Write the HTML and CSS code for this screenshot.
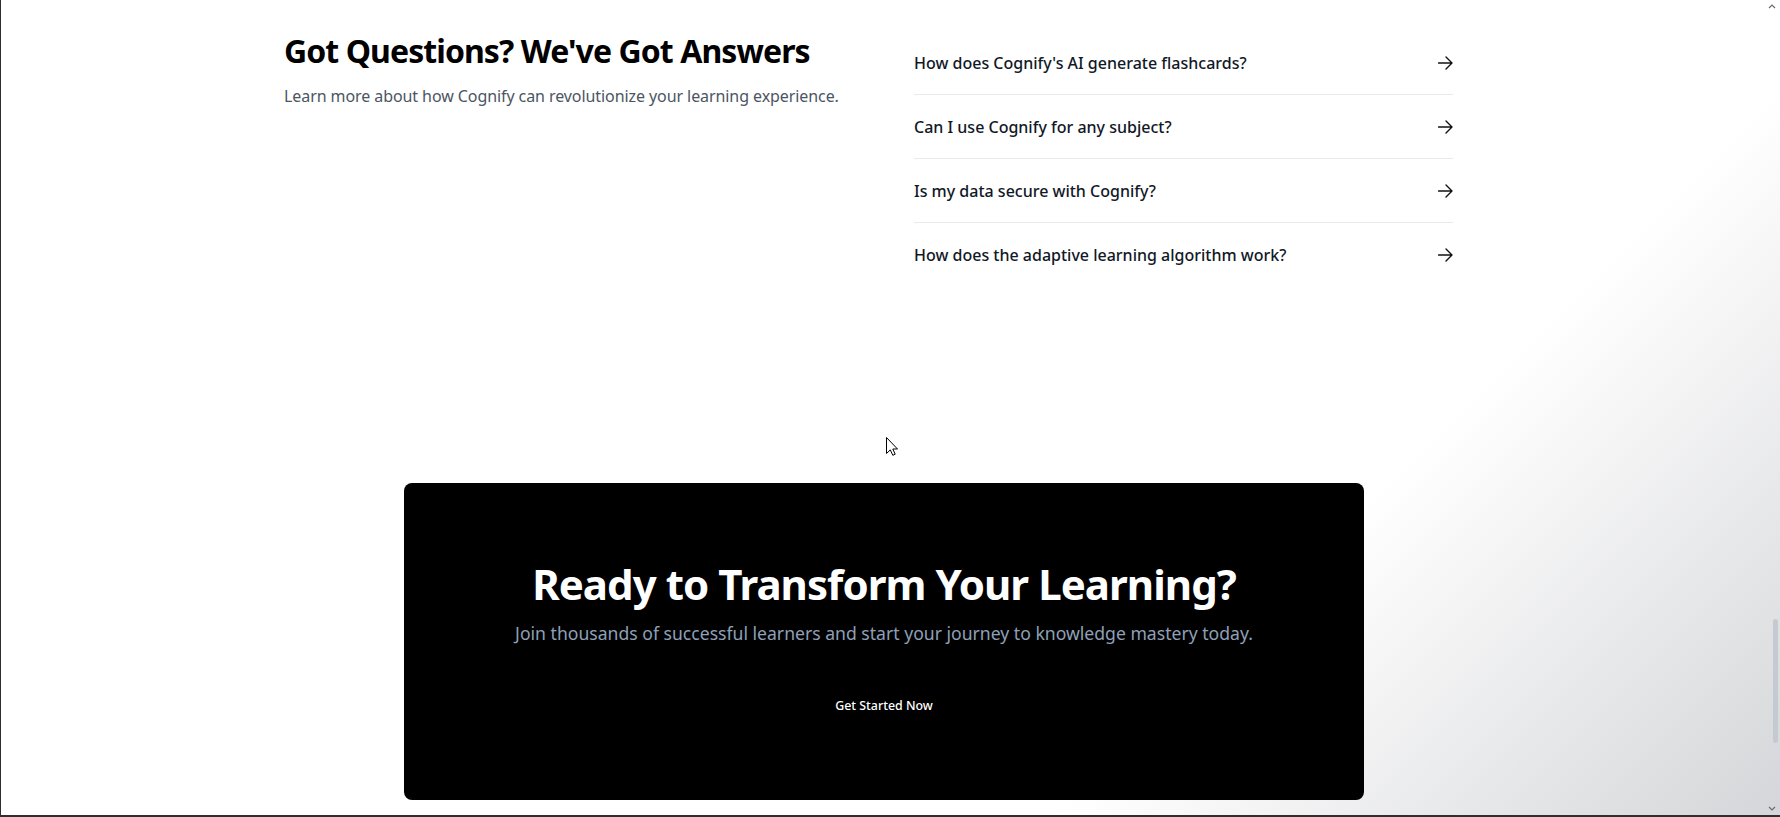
FILE: index.html
```html
<!DOCTYPE html>
<html lang="en">
<head>
<meta charset="utf-8">
<title>Cognify – FAQ</title>
<link rel="stylesheet" href="styles.css">
</head>
<body>
<div class="window">
  <main class="page">
    <section class="faq">
      <div class="faq-intro">
        <h2 class="faq-title">Got Questions? We've Got Answers</h2>
        <p class="faq-sub">Learn more about how Cognify can revolutionize your learning experience.</p>
      </div>
      <ul class="faq-list">
        <li class="faq-item"><span>How does Cognify's AI generate flashcards?</span><svg class="arrow" viewBox="0 0 15 14" width="15" height="14"><path d="M0.6 7H14M8 1l6 6-6 6"/></svg></li>
        <li class="faq-item"><span>Can I use Cognify for any subject?</span><svg class="arrow" viewBox="0 0 15 14" width="15" height="14"><path d="M0.6 7H14M8 1l6 6-6 6"/></svg></li>
        <li class="faq-item"><span>Is my data secure with Cognify?</span><svg class="arrow" viewBox="0 0 15 14" width="15" height="14"><path d="M0.6 7H14M8 1l6 6-6 6"/></svg></li>
        <li class="faq-item"><span>How does the adaptive learning algorithm work?</span><svg class="arrow" viewBox="0 0 15 14" width="15" height="14"><path d="M0.6 7H14M8 1l6 6-6 6"/></svg></li>
      </ul>
    </section>
    <section class="cta">
      <div class="cta-card">
        <h2 class="cta-title">Ready to Transform Your Learning?</h2>
        <p class="cta-sub">Join thousands of successful learners and start your journey to knowledge mastery today.</p>
        <button class="cta-btn" type="button">Get Started Now</button>
      </div>
    </section>
  </main>
  <div class="scrollbar">
    <svg class="sb-up" viewBox="0 0 8 5" width="8" height="5"><path d="M1 4l3-3 3 3"/></svg>
    <div class="sb-thumb"></div>
    <svg class="sb-down" viewBox="0 0 8 5" width="8" height="5"><path d="M1 1l3 3 3-3"/></svg>
  </div>
  <svg class="cursor" viewBox="0 0 12 19" width="12" height="19"><path d="M0.5 0.5V16.5L4.3 12.9L6.8 18.3L9.2 17.2L6.8 12H11.5Z"/></svg>
</div>
</body>
</html>
```
FILE: styles.css
```css
* { box-sizing: border-box; }
html, body { margin: 0; padding: 0; }
body {
  width: 1780px;
  height: 817px;
  overflow: hidden;
  font-family: "Noto Sans", "Open Sans", "Liberation Sans", sans-serif;
  color: #111827;
}
.window {
  position: relative;
  width: 1780px;
  height: 817px;
  border-left: 1px solid #2f2f2f;
  border-bottom: 2px solid #2f2f2f;
  background: linear-gradient(135deg, #ffffff 0%, #ffffff 72%, #d5d6d9 100%);
  padding-right: 17px;
}
.page { width: 100%; }

.faq {
  max-width: 1200px;
  margin: 0 auto;
  padding: 31px 29px 0 2px;
  display: grid;
  grid-template-columns: 1fr 539px;
  height: 483px;
}
.faq-title {
  margin: 0;
  font-size: 32px;
  line-height: 40px;
  font-weight: 700;
  color: #000;
  letter-spacing: -0.92px;
}
.faq-sub {
  margin: 12px 0 0;
  font-size: 16px;
  line-height: 26px;
  color: #4b5563;
  letter-spacing: -0.08px;
}
.faq-list { list-style: none; margin: 0; padding: 0; }
.faq-item {
  display: flex;
  align-items: center;
  justify-content: space-between;
  padding: 18px 0 17px;
  line-height: 28px;
  font-size: 16px;
  font-weight: 500;
  color: #111827;
  border-bottom: 1px solid #e8e9ec;
}
.faq-item:last-child { border-bottom: none; }
.arrow { fill: none; stroke: #111; stroke-width: 1.4; stroke-linecap: round; stroke-linejoin: round; }

.cta { display: flex; justify-content: center; padding-left: 4px; }
.cta-card {
  width: 960px;
  height: 317px;
  background: #000;
  border-radius: 8px;
  display: flex;
  flex-direction: column;
  align-items: center;
  padding-top: 77px;
  text-align: center;
}
.cta-title {
  margin: 0;
  color: #fff;
  font-size: 42px;
  line-height: 48px;
  font-weight: 700;
  letter-spacing: -0.95px;
}
.cta-sub {
  margin: 11px 0 0;
  color: #8fa0b8;
  font-size: 17.6px;
  line-height: 28px;
}
.cta-btn {
  margin-top: 43px;
  padding: 6px 24px;
  background: transparent;
  border: none;
  color: #fff;
  font-family: inherit;
  font-size: 12.4px;
  line-height: 20px;
  font-weight: 500;
}

.scrollbar {
  position: absolute;
  top: 0;
  right: 0;
  width: 17px;
  height: 815px;
}
.sb-up, .sb-down { position: absolute; left: 5px; fill: none; stroke: #6b6b6b; stroke-width: 1.2; }
.sb-up { top: 4px; }
.sb-down { bottom: 4px; }
.sb-thumb {
  position: absolute;
  top: 619px;
  left: 10px;
  width: 5px;
  height: 124px;
  border-radius: 3px;
  background: #c3cad1;
}
.cursor {
  position: absolute;
  left: 885px;
  top: 437px;
  fill: #fff;
  stroke: #000;
  stroke-width: 1;
  stroke-linejoin: round;
}
```
